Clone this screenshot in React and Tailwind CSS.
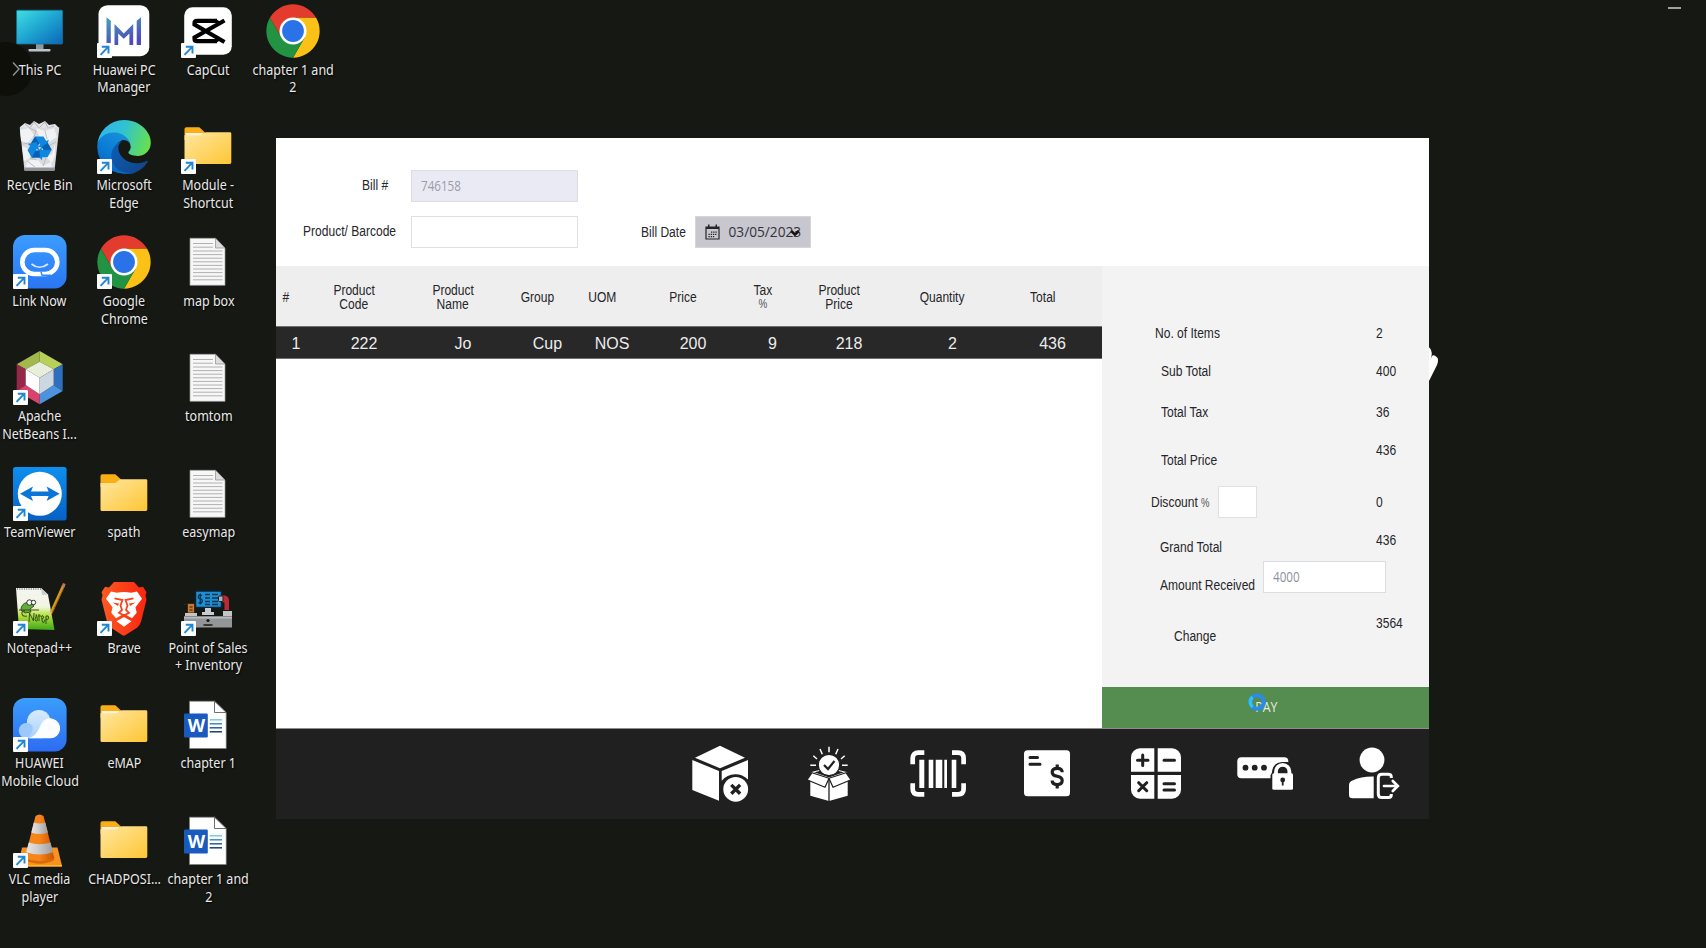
import React from "react";

/* ---------- desktop icons (54 x 54 drawings) ---------- */

const Svg = ({ children }) => (
  <svg viewBox="0 0 54 54" className="block size-[54px] overflow-visible">
    {children}
  </svg>
);

const ThisPC = () => (
  <Svg>
    <defs>
      <linearGradient id="pc" x1="0" y1="0" x2="1" y2="1">
        <stop offset="0" stopColor="#3ee0e4" />
        <stop offset="0.5" stopColor="#1ea4d0" />
        <stop offset="1" stopColor="#0b66b8" />
      </linearGradient>
    </defs>
    <rect x="23" y="39" width="7.5" height="7" fill="#8d9aa3" />
    <rect x="15.5" y="45" width="22" height="2.4" rx="0.8" fill="#bcc5cb" />
    <rect x="3.6" y="6.2" width="46" height="33.8" rx="0.8" fill="url(#pc)" stroke="#1d6f96" strokeWidth="0.8" />
  </Svg>
);

const RecycleBin = () => (
  <Svg>
    <path d="M7 7l5-4 5 2 4-4 5 3 6-3 4 4 6-1 4 4-1 5H8z" fill="#e3e5e8" />
    <path d="M12 4l5 4 4-6 5 6 6-6 3 6 6-2" fill="none" stroke="#a9adb3" strokeWidth="0.9" />
    <path d="M6.700 7.500h39.600L41.500 50.600h-30z" fill="#d9dbde" />
    <path d="M7 10l9-2 5 7-6 8-7-2zM23 8l9 3 9-3 3 9-8 5-9-4zM9 26l7 3 1 9-6 3zM42 24l-3 10-6 3 6 6 3-8zM14 41l10-2 6 7 8-4 1 6H13z" fill="#f1f2f3" />
    <path d="M16 8l7 3-2 6M32 11l2 8M10 24l6-1 3 6M43 22l-6 3-2 6M17 38l7 2M30 46l3-8M14 41l8 6" fill="none" stroke="#b5b8bd" strokeWidth="0.900" />
    <path d="M11.300 47.500h30.400l-.3 3.200H11.600z" fill="#8f949b" />
    {[0, 120, 240].map((a) => (
      <g key={a} transform={`rotate(${a} 26.500 28)`}>
        <path d="M17.700 23.500L22 16.500l6.300 3.800-3.800 6.400z" fill="#0760b4" />
        <path d="M22 16.500h8.500l2.700 4.600 2.600-1.400-2.800 9-8.600-2.100 2.800-1.600z" fill="#0f86e0" />
      </g>
    ))}
  </Svg>
);

const LinkNow = () => (
  <Svg>
    <defs>
      <linearGradient id="ln" x1="0" y1="0" x2="0" y2="1">
        <stop offset="0" stopColor="#3b9cff" />
        <stop offset="1" stopColor="#2a76f4" />
      </linearGradient>
    </defs>
    <rect width="53.6" height="53.6" rx="12" fill="url(#ln)" />
    <rect x="9.300" y="15" width="35" height="24" rx="12" fill="none" stroke="#fff" strokeWidth="4.600" />
    <path d="M28 36.800l1 3.500h9" fill="none" stroke="#318afa" strokeWidth="1.400" />
    <path d="M18.500 29q8 6.500 16.500 0" fill="none" stroke="#d6eaff" strokeWidth="1.700" />
  </Svg>
);

const NetBeans = () => (
  <Svg>
    <path d="M26.700 0L3.700 13.300 12.700 18.300 26.700 10.700z" fill="#a3b84c" />
    <path d="M26.700 0L49.700 13.300 40.700 18.300 26.700 10.700z" fill="#b9d058" />
    <path d="M3.700 13.300V40l9-6V18.300z" fill="#95284a" />
    <path d="M49.700 13.300V40l-9-6V18.300z" fill="#2e70bd" />
    <path d="M3.700 40l23 13.300v-10l-14-9.300z" fill="#d9436c" />
    <path d="M49.700 40l-23 13.300v-10l14-9.300z" fill="#4b93dc" />
    <path d="M26.700 10.700l14 7.600-14 8.400-14-8.400z" fill="#e9eddc" />
    <path d="M12.700 18.300l14 8.400v16.600l-14-9.300z" fill="#fdfdfd" />
    <path d="M40.700 18.300l-14 8.400v16.600l14-9.300z" fill="#cbd7e1" />
  </Svg>
);

const TeamViewer = () => (
  <Svg>
    <defs>
      <linearGradient id="tv" x1="0" y1="0" x2="0" y2="1">
        <stop offset="0" stopColor="#0e8fee" />
        <stop offset="1" stopColor="#0661c4" />
      </linearGradient>
    </defs>
    <rect width="53.600" height="53.600" rx="2.500" fill="url(#tv)" />
    <circle cx="26.800" cy="26.800" r="22" fill="#fff" />
    <path d="M7 26.800l13-7.300-2 5h17.600l-2-5 13 7.300-13 7.300 2-5H18l2 5z" fill="#0b76d8" />
  </Svg>
);

const NotepadPP = () => (
  <Svg>
    <defs>
      <linearGradient id="npp" x1="0" y1="0" x2="0" y2="1">
        <stop offset="0" stopColor="#f5f5f2" />
        <stop offset="0.45" stopColor="#f1f6e0" />
        <stop offset="0.65" stopColor="#b6e23c" />
        <stop offset="1" stopColor="#3fa81c" />
      </linearGradient>
    </defs>
    <path d="M3 6h25l7 6.500 6.500 35.500L6 47z" fill="url(#npp)" />
    <path d="M28 6l1 7 6-.5z" fill="#c9ccd0" />
    <path d="M4 7h24" stroke="#777" strokeWidth="1.500" strokeDasharray="1 1.300" />
    <path d="M8 28c0-6 5-9 11-7l2 3-4 3 1 3-6 1z" fill="#5fae36" stroke="#274d17" strokeWidth="0.900" />
    <path d="M6 28h20M12 29q-4 0-3 3t5 2" fill="none" stroke="#4b4a2a" strokeWidth="1.100" />
    <circle cx="16.500" cy="20.500" r="2.700" fill="#fff" stroke="#222" strokeWidth="0.900" />
    <circle cx="20.500" cy="20.500" r="2.200" fill="#fff" stroke="#222" strokeWidth="0.900" />
    <path d="M16 40l.5-9 4 8 .5-8M23 35q-2 3 0 4t1-4-1 0M26 32v7M25 34h3M29 37q3-1 1-3t-1 4 3-.5M33 42v-8q3-1 2.500 2t-2.500 1" fill="none" stroke="#2f4f1c" strokeWidth="1" />
    <path d="M50.500 3.500L38 31" stroke="#d99a1f" strokeWidth="3" />
    <path d="M51.500 4L39 31" stroke="#8d5a12" strokeWidth="0.800" />
    <path d="M51.300 1.500l-1.200 3" stroke="#c66a75" strokeWidth="3" />
    <path d="M38 30l-1.300 4" stroke="#e7c894" strokeWidth="1.600" />
  </Svg>
);

const MobileCloud = () => (
  <Svg>
    <defs>
      <linearGradient id="mc" x1="0" y1="0" x2="0" y2="1">
        <stop offset="0" stopColor="#3a9dfb" />
        <stop offset="1" stopColor="#2e6cf2" />
      </linearGradient>
      <linearGradient id="mc2" x1="0" y1="0" x2="0" y2="1">
        <stop offset="0" stopColor="#d9ecff" />
        <stop offset="1" stopColor="#a9d0fc" />
      </linearGradient>
    </defs>
    <rect width="53.600" height="53.600" rx="12" fill="url(#mc)" />
    <path d="M14 40.300V22a12 12 0 0 1 23.500-1L30 40.300z" fill="url(#mc2)" />
    <path d="M14 40.300a7.700 7.700 0 1 1 5.500-12.500q1.500 6-5.500 12.500z" fill="#9bc9fb" />
    <path d="M16 40.300h21.500a10 10 0 1 0-9.500-14c-3 7-6 12-12 14z" fill="#fbfdff" />
  </Svg>
);

const Vlc = () => (
  <Svg>
    <defs>
      <linearGradient id="vo" x1="0" y1="0" x2="1" y2="0">
        <stop offset="0" stopColor="#f58a1a" />
        <stop offset="0.5" stopColor="#f7831a" />
        <stop offset="1" stopColor="#c95300" />
      </linearGradient>
      <linearGradient id="vw" x1="0" y1="0" x2="1" y2="0">
        <stop offset="0" stopColor="#e6e6e6" />
        <stop offset="0.4" stopColor="#cfcfcf" />
        <stop offset="1" stopColor="#9d9d9d" />
      </linearGradient>
    </defs>
    <path d="M9 33.500h35.500L48.800 51v1.500H5V51z" fill="#f7931e" />
    <path d="M5 51h44v1.600H5z" fill="#ffb82e" />
    <path d="M12.500 43q14 7 28.500 0l.5 3q-14.500 7.500-29.500 0z" fill="#d86a08" />
    <path d="M22.500 2q4-3.200 8 0l10.800 42q-14.600 6.500-29.300 0z" fill="url(#vo)" />
    <path d="M20.800 8.500q6 2 11.500 0l2.600 10q-8.300 3-16.600 0z" fill="url(#vw)" />
    <path d="M15.700 28.500q11 3.600 21.800 0l2.500 9.700q-13.400 4.500-26.800 0z" fill="url(#vw)" />
  </Svg>
);

const PcManager = () => (
  <Svg>
    <defs>
      <linearGradient id="pm" x1="0" y1="0" x2="0.400" y2="1">
        <stop offset="0" stopColor="#47a0b8" />
        <stop offset="1" stopColor="#4f4ab8" />
      </linearGradient>
    </defs>
    <rect x="1.500" y="1.200" width="50.800" height="51" rx="9" fill="#fff" />
    <path d="M9.500 13.300l4.300 3.500V41H9.500zM44 13.300l-4.300 3.500V41H44zM17.500 41V20l9.300 9.500L36.200 20v21h-3.800V29.500l-5.600 5.300-5.600-5.300V41z" fill="url(#pm)" />
  </Svg>
);

const Edge = () => (
  <svg viewBox="0 0 256 258" className="block size-[54px]">
    <defs>
      <linearGradient id="e1" x1="0.200" y1="0" x2="1" y2="0.500">
        <stop offset="0" stopColor="#0d5bb0" />
        <stop offset="1" stopColor="#11478f" />
      </linearGradient>
      <linearGradient id="e2" x1="0.800" y1="0" x2="0.300" y2="1">
        <stop offset="0" stopColor="#1a94dd" />
        <stop offset="0.600" stopColor="#0a7ad4" />
        <stop offset="1" stopColor="#0a62bd" />
      </linearGradient>
      <linearGradient id="e3" x1="0" y1="0.300" x2="1" y2="0.550">
        <stop offset="0" stopColor="#33b4ec" />
        <stop offset="0.450" stopColor="#2fc2d2" />
        <stop offset="1" stopColor="#67e04d" />
      </linearGradient>
    </defs>
    <path fill="url(#e1)" d="M235.680 195.460a93.730 93.730 0 0 1-10.540 4.710 101.870 101.870 0 0 1-35.900 6.460c-47.320 0-88.540-32.550-88.540-74.320A31.480 31.480 0 0 1 117.130 105c-42.800 1.800-53.800 46.400-53.800 72.530 0 73.880 68.090 81.370 82.760 81.370 7.910 0 19.840-2.300 27-4.560l1.310-.44a128.340 128.340 0 0 0 66.600-52.800 4 4 0 0 0-5.320-5.640z" />
    <path fill="url(#e2)" d="M105.730 241.420a79.200 79.200 0 0 1-22.740-21.340 80.720 80.720 0 0 1 29.530-120c3.130-1.470 8.480-4.130 15.600-4a32.350 32.350 0 0 1 25.690 13 31.880 31.880 0 0 1 6.360 18.660c0-.21 24.460-79.600-80-79.600-43.900 0-80 41.660-80 78.210a130.150 130.150 0 0 0 12.110 56 128 128 0 0 0 156.380 67.110 75.550 75.550 0 0 1-62.780-8z" />
    <path fill="url(#e3)" d="M152.330 149.860c-.81 1.050-3.300 2.500-3.300 5.660 0 2.610 1.700 5.120 4.720 7.230 14.380 10 41.490 8.680 41.560 8.680a59.560 59.560 0 0 0 30.270-8.350 61.380 61.380 0 0 0 30.430-52.880c.26-22.410-8-37.310-11.340-43.910C223.460 24.870 177.720.010 128 .010a128 128 0 0 0-128 126.200c.48-36.540 36.800-66.050 80-66.050 3.500 0 23.460.34 42 10.070 16.340 8.580 24.900 18.940 30.850 29.210 6.180 10.670 7.280 24.150 7.280 29.520s-2.740 13.330-7.800 20.900z" />
  </svg>
);

const Chrome = () => (
  <Svg>
    <path d="M3.900 13.650A26.700 26.700 0 0 1 50.100 13.650L27 13.650 15.440 33.670z" fill="#e33b2e" />
    <path d="M50.100 13.650A26.700 26.700 0 0 1 27 53.700L38.560 33.670 27 13.650z" fill="#fbc116" />
    <path d="M27 53.700A26.700 26.700 0 0 1 3.900 13.650L15.440 33.670 38.560 33.670z" fill="#229342" />
    <circle cx="27" cy="27" r="13.500" fill="#fff" />
    <circle cx="27" cy="27" r="10.900" fill="#2a72e8" />
  </Svg>
);

const Folder = ({ light = true }) => (
  <Svg>
    <defs>
      <linearGradient id="fo" x1="0" y1="0" x2="1" y2="1">
        <stop offset="0" stopColor="#ffe6a0" />
        <stop offset="1" stopColor="#ffc634" />
      </linearGradient>
    </defs>
    <path d="M3.500 9a1.800 1.800 0 0 1 1.800-1.800h13L24 12.400V20H3.500z" fill="#f8ae14" />
    {light && <path d="M4.500 13h18l-2.500 3H4.500z" fill="#fff3df" />}
    <path d={light ? "M3.500 15.300h15q2 0 3.500-1.500t3-1.500h24q1.300 0 1.300 1.300v29q0 1.400-1.400 1.400H5q-1.500 0-1.500-1.500z" : "M3.500 16h14q2 0 3.500-2t3-1.700h25q1.300 0 1.300 1.300v29q0 1.400-1.400 1.400H5q-1.500 0-1.500-1.500z"} fill="url(#fo)" />
  </Svg>
);

const Brave = () => (
  <Svg>
    <defs>
      <linearGradient id="br" x1="0" y1="0" x2="1" y2="0">
        <stop offset="0" stopColor="#fb5a22" />
        <stop offset="1" stopColor="#fa2510" />
      </linearGradient>
    </defs>
    <path d="M17 0h20l5 5.500 4-.8 3.500 5.500-1 3 1 4.500-5.500 22q-1 3.500-4 6L28.500 53q-1.700 1.200-3.400 0L14 45.700q-3-2.500-4-6L4.500 17.700l1-4.500-1-3L8 4.700l4 .8z" fill="url(#br)" />
    <path d="M14 9.500l6 1.200q7-1.400 14 0l6-1.200 5 7.200-6.500 8.500 1.200 5.500-4.700 5.500-8-4.500-8 4.500-4.700-5.500 1.200-5.500L9 16.700z" fill="#fff" />
    <path d="M17.500 16.300l8 1.700-2 5.500 1.500 4.500-3 2.800 5 2.700 5-2.700-3-2.800 1.500-4.500-2-5.500 8-1.700" fill="none" stroke="#fa431a" strokeWidth="1.800" />
    <path d="M15.500 20.500l6.500 1-1 2.500zM38.500 20.500l-6.500 1 1 2.500z" fill="#fa431a" />
    <path d="M27 35l7.500 4.200L27 44.700l-7.500-5.500z" fill="#fff" />
  </Svg>
);

const CapCut = () => (
  <Svg>
    <rect x="3.200" y="3.200" width="47.600" height="47.600" rx="8.500" fill="#fff" />
    <path d="M36 16.800H16q-2.500 0-2.500 2.500v1.200L43.500 38M36 37.200H16q-2.500 0-2.500-2.500v-1.200L43.500 16.500" fill="none" stroke="#000" strokeWidth="4.200" />
    <path d="M35 15l4.500 3-3 3.500zM35 39l4.500-3-3-3.500z" fill="#000" />
  </Svg>
);

const TextDoc = () => (
  <Svg>
    <path d="M9 3.300h25.500L44 13v37.300H9z" fill="#f7f7f7" stroke="#9c9c9c" strokeWidth="0.700" />
    <path d="M34.500 3.300V13H44z" fill="#dcdcdc" stroke="#8d8d8d" strokeWidth="0.700" />
    <path d="M12 8.500h20M12 12.200h20M12 16h29.500M12 19.600h29.500M12 23.200h29.500M12 26.800h29.500M12 30.400h29.500M12 34h29.500M12 37.600h29.500M12 41.200h29.500M12 44.800h29.500" stroke="#b0b0b0" strokeWidth="1" />
  </Svg>
);

const PosIcon = () => (
  <Svg>
    <rect x="14.500" y="9" width="26" height="16.500" fill="#1f8fd4" stroke="#0a2438" strokeWidth="1.500" />
    <path d="M24 12.500h5M31 12.500h6M24 16h5M31 16h6M24 19.500h5M31 19.500h6M24 22.500h5M31 22.500h6" stroke="#0a3350" strokeWidth="1.600" />
    <path d="M21 13.500q-3-1.500-3.500.8t2 2.700 1.500 3-3.500.5M19.300 11.500v11" fill="none" stroke="#0a3350" strokeWidth="1.300" />
    <path d="M24 26h6v4h3v3H21v-3h3z" fill="#c9cdd1" />
    <rect x="6.500" y="21.500" width="7" height="9.500" fill="#c27a35" stroke="#3e2509" />
    <path d="M8.500 25h3M8.500 28h3M3 22.500h2" stroke="#3e2509" strokeWidth="1" />
    <path d="M39 13.500h5q4 1 4 5V28h-4.500v-7q0-1-4.500-1z" fill="#b82a3b" />
    <rect x="37.500" y="14" width="4.500" height="5.500" rx="1" fill="#aeb4ba" stroke="#1b1d20" />
    <path d="M4 31h12v3H4zM42 29h9v5h-9z" fill="#c3c5c7" />
    <path d="M3 34.500h48v11H3z" fill="#939699" />
    <path d="M3 34.500h48v2H3z" fill="#b9bbbd" />
    <circle cx="27" cy="38.500" r="1.600" fill="#161814" />
    <path d="M22.500 43h9" stroke="#161814" strokeWidth="1.500" />
  </Svg>
);

const WordDoc = () => (
  <div className="relative">
    <Svg>
      <path d="M8.500 3.200h25L45.200 14.500v36H8.500z" fill="#fff" stroke="#7d7d7d" strokeWidth="0.700" />
      <path d="M33.500 3.200v11.300h11.700z" fill="#fff" stroke="#5e5e5e" strokeWidth="0.900" />
      <path d="M28.700 21.800H41" stroke="#7fcbe4" strokeWidth="1.500" />
      <path d="M28.700 25.800H41" stroke="#3f8cc4" strokeWidth="1.500" />
      <path d="M28.700 29.800H41" stroke="#2b5c9e" strokeWidth="1.500" />
      <path d="M28.700 33.800H41" stroke="#1b3d75" strokeWidth="1.500" />
      <rect x="3" y="15.600" width="23.800" height="23.800" rx="1.200" fill="#185abd" />
    </Svg>
    <span className="absolute left-[3px] top-[15px] flex h-6 w-6 items-center justify-center font-['Open_Sans',sans-serif] text-[18px] font-bold leading-none text-white">
      W
    </span>
  </div>
);

const Shortcut = () => (
  <svg viewBox="0 0 15 15" className="absolute bottom-0 left-0 size-[15px]">
    <rect width="15" height="15" rx="1" fill="#fdfdfd" />
    <path d="M3.500 11.800L11 4.200M4.800 3.800h6.700v6.700" fill="none" stroke="#1e86d2" strokeWidth="1.900" />
  </svg>
);

const COLUMNS = [
  [
    { icon: ThisPC, label: ["This PC"] },
    { icon: RecycleBin, label: ["Recycle Bin"] },
    { icon: LinkNow, label: ["Link Now"], link: true },
    { icon: NetBeans, label: ["Apache", "NetBeans I..."], link: true },
    { icon: TeamViewer, label: ["TeamViewer"], link: true },
    { icon: NotepadPP, label: ["Notepad++"], link: true },
    { icon: MobileCloud, label: ["HUAWEI", "Mobile Cloud"], link: true },
    { icon: Vlc, label: ["VLC media", "player"], link: true },
  ],
  [
    { icon: PcManager, label: ["Huawei PC", "Manager"], link: true },
    { icon: Edge, label: ["Microsoft", "Edge"], link: true },
    { icon: Chrome, label: ["Google", "Chrome"], link: true },
    null,
    { icon: () => <Folder light={false} />, label: ["spath"] },
    { icon: Brave, label: ["Brave"], link: true },
    { icon: Folder, label: ["eMAP"] },
    { icon: Folder, label: ["CHADPOSI..."] },
  ],
  [
    { icon: CapCut, label: ["CapCut"], link: true },
    { icon: Folder, label: ["Module -", "Shortcut"], link: true },
    { icon: TextDoc, label: ["map box"] },
    { icon: TextDoc, label: ["tomtom"] },
    { icon: TextDoc, label: ["easymap"] },
    { icon: PosIcon, label: ["Point of Sales", "+ Inventory"], link: true },
    { icon: WordDoc, label: ["chapter 1"] },
    { icon: WordDoc, label: ["chapter 1 and", "2"] },
  ],
  [{ icon: Chrome, label: ["chapter 1 and", "2"] }],
];

function DesktopItem({ item }) {
  if (!item) return <div className="h-[115.67px]" />;
  const Icon = item.icon;
  return (
    <div className="flex h-[115.67px] flex-col items-center">
      <div className="relative">
        <Icon />
        {item.link && <Shortcut />}
      </div>
      <div className="mt-[2.5px] flex flex-col items-center font-['Noto_Sans',sans-serif] text-[13.6px] leading-[17.7px] text-[#e9e9e9] [text-shadow:1px_1px_2px_#000]">
        {item.label.map((line) => (
          <span key={line} className="scale-x-[0.92] whitespace-nowrap">
            {line}
          </span>
        ))}
      </div>
    </div>
  );
}

/* ---------- billing window ---------- */

const HEADERS = [["#"], ["Product", "Code"], ["Product", "Name"], ["Group"], ["UOM"], ["Price"], ["Tax", "%"], ["Product", "Price"], ["Quantity"], ["Total"]];
const ROW = ["1", "222", "Jo", "Cup", "NOS", "200", "9", "218", "2", "436"];

const Label = ({ className = "", children }) => (
  <span className={`block origin-left scale-x-[0.86] whitespace-nowrap text-[14px] leading-5 text-[#26262a] ${className}`}>{children}</span>
);

function BillForm() {
  return (
    <div className="flex h-[128px] shrink-0 bg-white pl-[27px] pt-8">
      <div className="flex w-[108px] flex-col">
        <Label className="ml-[59px] mt-[5px]">Bill #</Label>
        <Label className="mt-[26px]">Product/ Barcode</Label>
      </div>
      <div className="flex w-[167px] flex-col gap-[14px]">
        <div className="flex h-8 items-center border border-[#dcdde2] bg-[#eaeaf5] pl-[9px]">
          <span className="origin-left scale-x-[0.85] font-['Open_Sans',sans-serif] text-[13.7px] text-[#9a9da6]">746158</span>
        </div>
        <div className="h-8 border border-[#dfe0e3] bg-white" />
      </div>
      <div className="ml-[63px] mt-[46px] flex h-8 items-center">
        <Label className="w-[53.5px] scale-x-[0.84]">Bill Date</Label>
        <div className="relative flex h-8 w-[116px] items-center border border-[#d6d5da] bg-[#c8c6cf] pl-[9px]">
          <svg viewBox="0 0 15 16" className="h-4 w-[15px]">
            <path d="M1 3h13v12H1z" fill="none" stroke="#26262a" strokeWidth="1.200" />
            <path d="M1 3h13v2H1zM3 .5h1.500v3H3zM10.500 .5H12v3h-1.500z" fill="#26262a" />
            <path d="M6 8.200h6M3.500 10.400h8.500M3.500 12.600h6" stroke="#26262a" strokeWidth="1.200" strokeDasharray="1.300 0.900" />
          </svg>
          <span className="ml-[9px] origin-left font-['Open_Sans',sans-serif] text-[13.700px] text-[#333338]">03/05/2023</span>
          <svg viewBox="0 0 10 8" className="absolute left-[94px] top-[12px] h-2 w-[10px]">
            <path d="M1.200 2l3.800 3.500L8.800 2" fill="none" stroke="#111" strokeWidth="2.400" />
          </svg>
        </div>
      </div>
    </div>
  );
}

const GRID = "grid grid-cols-[20px_116px_82px_87px_42px_120px_39px_114px_93px_107px]";

function ItemsTable() {
  return (
    <div className="flex w-[825.5px] flex-col bg-white">
      <div className={`${GRID} h-[60px] items-center bg-[#eeeeee] text-center text-[14px] leading-[14.500px] text-[#26262a]`}>
        {HEADERS.map((lines, i) => (
          <div key={i} className="flex flex-col items-center pt-[2px]">
            {lines.map((l) => (
              <span key={l} className={l === "%" ? "scale-x-[0.76] text-[13px] text-[#505055]" : "scale-x-[0.86]"}>
                {l}
              </span>
            ))}
          </div>
        ))}
      </div>
      <div className={`${GRID} h-[33px] items-center border-y border-[#6f6f6f] bg-[#282828] pl-[10px] pt-[2px] text-center text-[16px] text-[#ececec]`}>
        {ROW.map((v, i) => (
          <span key={i}>{v}</span>
        ))}
      </div>
    </div>
  );
}

function Summary() {
  return (
    <div className="flex w-[327.5px] flex-col bg-[#f3f3f3]">
      <div className="flex h-[421px]">
        <div className="flex w-[274.5px] flex-col pl-[49px] pt-[57px]">
          <Label className="ml-[4px]">No. of Items</Label>
          <Label className="ml-[10px] mt-[18px]">Sub Total</Label>
          <Label className="ml-[10px] mt-[21px]">Total Tax</Label>
          <Label className="ml-[10px] mt-[28px]">Total Price</Label>
          <div className="mt-4 flex h-8 items-center">
            <Label className="w-[67.5px]">
              Discount <span className="inline-block origin-left scale-x-[0.85] text-[13px] text-[#505055]">%</span>
            </Label>
            <div className="h-8 w-[39px] border border-[#dfe0e3] bg-white" />
          </div>
          <Label className="ml-[9px] mt-[19px]">Grand Total</Label>
          <div className="mt-1 flex h-8 pl-[9.5px]">
            <Label className="mt-[14px] w-[102.5px] shrink-0">Amount Received</Label>
            <div className="flex h-8 w-[123px] shrink-0 items-center border border-[#dadde2] bg-white pl-[9px]">
              <span className="origin-left scale-x-[0.85] font-['Open_Sans',sans-serif] text-[13.700px] text-[#8a919c]">4000</span>
            </div>
          </div>
          <Label className="ml-[23px] mt-[33px]">Change</Label>
        </div>
        <div className="flex flex-col pt-[57px]">
          <Label>2</Label>
          <Label className="mt-[18px]">400</Label>
          <Label className="mt-[21px]">36</Label>
          <Label className="mt-[18px]">436</Label>
          <Label className="mt-[32px]">0</Label>
          <Label className="mt-[18px]">436</Label>
          <Label className="mt-[63px]">3564</Label>
        </div>
      </div>
      <button className="flex h-[41px] items-center justify-center bg-[#558c4f] pl-[3px] font-['Open_Sans',sans-serif] text-[13.700px] text-[#e4ece2]">
        <span className="scale-x-[0.9]">PAY</span>
      </button>
    </div>
  );
}

/* ---------- toolbar icons (60 x 60 drawings) ---------- */

const BG = "#202020";
const Tool = ({ children }) => (
  <div className="flex w-[109px] items-center justify-center">
    <svg viewBox="0 0 60 60" className="size-[60px]" fill="#fff">
      {children}
    </svg>
  </div>
);

const Rays = () => (
  <path
    d="M30 2.700v5.600M21 5l2.300 5.300M39 5l-2.300 5.300M14.300 11.700L18 15M45.700 11.700L42 15M11.300 21.300H17M48.700 21.300H43"
    fill="none"
    stroke="#fff"
    strokeWidth="1.500"
  />
);

function Toolbar() {
  return (
    <div className="flex h-[91px] justify-end border-t border-[#8d8d8d] bg-[#202020] pr-px">
      <Tool>
        <path d="M30 1.700l25 12-25 10.600-25-10.600z" />
        <path d="M2.300 16L29 27v29.700L2.300 46z" />
        <path d="M31.700 27L58 16v19.500Q52 30 45 30.300q-8 .2-13.300 6.500z" />
        <circle cx="45.700" cy="45.300" r="12.400" />
        <path d="M42.500 42.100l6.400 6.400M48.900 42.100l-6.400 6.400" stroke={BG} strokeWidth="3.400" strokeLinecap="square" />
      </Tool>
      <Tool>
        <Rays />
        <path d="M11.300 37L30 33l18.700 4v14.700L30 57l-18.700-5.300z" />
        <path d="M30 34v23" stroke={BG} strokeWidth="1.300" />
        <path d="M13.500 28.300L30 34l16.500-5.700L30 24z" fill={BG} stroke="#fff" strokeWidth="1.100" />
        <path d="M13 28.700L30 34.300l-4 9-18-7.500z" stroke={BG} strokeWidth="1.200" />
        <path d="M47 28.700L30 34.300l4 9 18-7.500z" stroke={BG} strokeWidth="1.200" />
        <circle cx="30" cy="21" r="10.700" stroke={BG} strokeWidth="1.200" />
        <path d="M25 21l4 4 6.500-8" fill="none" stroke={BG} strokeWidth="2.200" />
      </Tool>
      <Tool>
        <path d="M4.700 20.300v-6q0-5.600 5.600-5.600h6M44 8.700h6q5.600 0 5.600 5.600v6M4.700 39.300v6q0 5 5.600 5h6M44 50.300h6q5.600 0 5.600-5v-6" fill="none" stroke="#fff" strokeWidth="4.700" />
        <path d="M11.300 15.700h5V44h-5zM20.700 15.700h4.600V44h-4.600zM27.700 15.700h6.600V44h-6.600zM36.300 15.700H39V44h-2.700zM43.700 15.700h4.600V44h-4.600z" />
      </Tool>
      <Tool>
        <rect x="7" y="6.200" width="46" height="46" rx="3.500" />
        <path d="M13 13.400h7.500M13 20.300h10" stroke={BG} strokeWidth="3" strokeLinecap="round" />
        <path d="M45.200 28.300q0-4-5-4t-5 3.900q0 3.200 5 4.100t5 4.300q0 4-5 4t-5-4M40.200 20.500v4M40.200 40.500v4" fill="none" stroke={BG} strokeWidth="3.200" />
      </Tool>
      <Tool>
        <path d="M28.300 4.300v23.400H5V13.300a9 9 0 0 1 9-9zM31.700 4.300H46a9 9 0 0 1 9 9v14.400H31.700zM5 31h23.300v23.700H14a9 9 0 0 1-9-9zM31.700 31H55v14.700a9 9 0 0 1-9 9H31.700z" />
        <path d="M11.500 16.300h10.500M16.700 11v10.500M38 16.300h10.500M12.700 38.700l8 8M20.700 38.700l-8 8M38 39.700h10.500M38 46h10.500" stroke={BG} strokeWidth="3" strokeLinecap="round" />
      </Tool>
      <Tool>
        <rect x="2.300" y="13.300" width="51" height="21" rx="4" />
        <circle cx="10.500" cy="23.700" r="2.900" fill={BG} />
        <circle cx="19.700" cy="23.700" r="2.900" fill={BG} />
        <circle cx="29" cy="23.700" r="2.900" fill={BG} />
        <path d="M35.500 46V31q1.800-2 1.800-5a10.600 10.600 0 0 1 9.500-8H58l2 28z" fill={BG} />
        <rect x="37.300" y="29.300" width="20.700" height="16.500" rx="1.500" />
        <path d="M41 30v-2.500a6.700 6.700 0 0 1 13.400 0V30" fill="none" stroke="#fff" strokeWidth="3.800" />
        <circle cx="47.700" cy="36" r="2.400" fill={BG} />
        <path d="M47.700 36v5.500" stroke={BG} strokeWidth="1.800" />
      </Tool>
      <Tool>
        <circle cx="28" cy="16" r="12.400" />
        <path d="M29.700 32.500V54.300H8.500Q5 54.300 5 51V41q0-3 3-4.300 9.500-4.500 21.700-4.200z" />
        <path d="M47.300 34v-1q0-2.800-3-2.800H38q-3.700 0-3.700 3.700v16q0 3.700 3.700 3.700h6.300q3 0 3-2.800V50" fill="none" stroke="#fff" strokeWidth="3" />
        <path d="M40 42h13M48.800 37l5 5-5 5" fill="none" stroke="#fff" strokeWidth="2.700" strokeLinecap="round" />
      </Tool>
    </div>
  );
}

export default function App() {
  return (
    <div className="relative h-[948px] w-[1706px] overflow-hidden bg-[#161814] font-['Liberation_Sans',Arial,sans-serif]">
      <div className="absolute -left-[21px] top-[42px] size-[54px] rounded-full bg-[#0f0f0a]" />
      <div className="-ml-[2.5px] flex pt-1">
        {COLUMNS.map((col, i) => (
          <div key={i} className="flex w-[84.400px] flex-col">
            {col.map((item, j) => (
              <DesktopItem key={j} item={item} />
            ))}
          </div>
        ))}
      </div>
      <svg viewBox="0 0 8 16" className="absolute left-[12px] top-[61px] h-4 w-2">
        <path d="M1 1.500l6 6.500-6 6.500" fill="none" stroke="#8e8e8a" strokeWidth="1.500" />
      </svg>
      <div className="absolute left-[1668px] top-[7px] h-[2px] w-[13px] bg-[#a0a09c]" />
      <svg viewBox="0 0 14 40" className="absolute left-[1426px] top-[344px] h-10 w-[14px]">
        <path d="M0 2q3.500.5 5 4t.500 6.500L4 17.500H0z" fill="#fff" />
        <path d="M2 19l4.500-7.500q1-.8 3 .5t2.500 3q.3 3-1 6L2.500 38z" fill="#fff" />
      </svg>
      <div className="absolute left-[276px] top-[138px] flex w-[1153px] flex-col">
        <BillForm />
        <div className="flex h-[462px]">
          <ItemsTable />
          <Summary />
        </div>
        <Toolbar />
      </div>
      <svg viewBox="0 0 18 18" className="absolute left-[1248px] top-[693px] size-[18px]">
        <circle cx="9" cy="9" r="6.800" fill="none" stroke="#2b8be6" strokeWidth="4" />
        <path d="M4.500 14A6.800 6.800 0 0 1 4.500 4" fill="none" stroke="#2fc0f5" strokeWidth="3.600" />
      </svg>
    </div>
  );
}
